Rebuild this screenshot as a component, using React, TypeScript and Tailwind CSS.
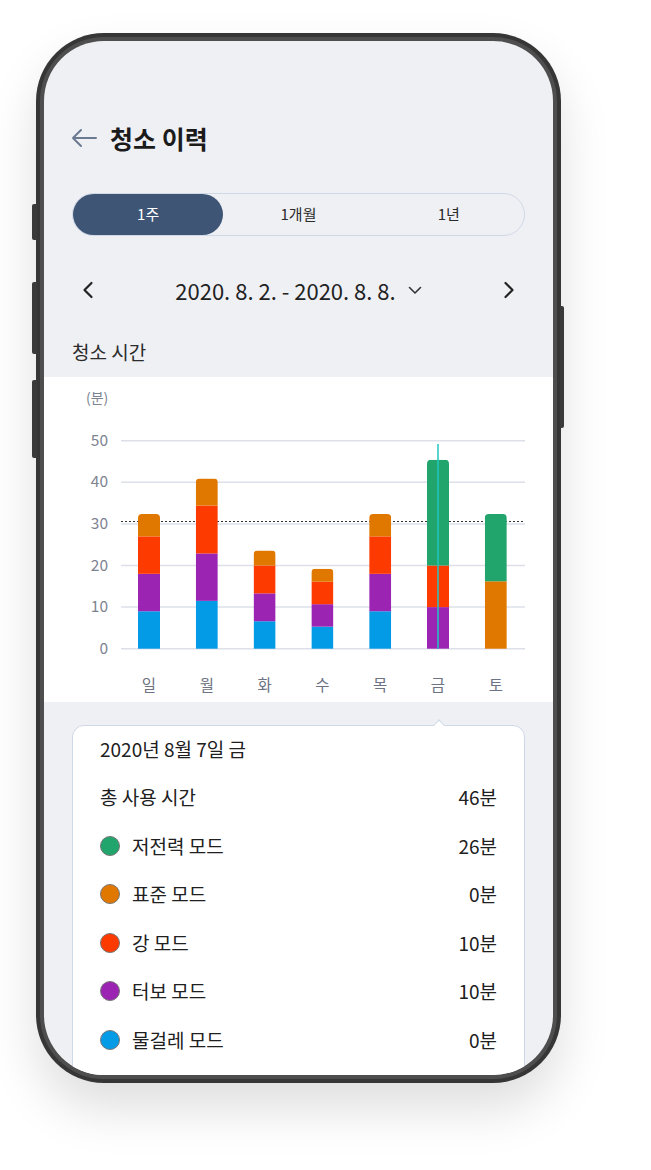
import React from "react";

const FONT = { fontFamily: '"Noto Sans CJK KR", "Noto Sans", sans-serif' };

const C = {
  blue: "#049be6",
  purple: "#9c24b2",
  red: "#fd3a00",
  orange: "#e07800",
  green: "#22a56c",
};

// bottom -> top: 물걸레, 터보, 강, 표준, 저전력
const WEEK: { day: string; v: number[] }[] = [
  { day: "일", v: [9, 9, 9, 5.4, 0] },
  { day: "월", v: [11.5, 11.4, 11.5, 6.5, 0] },
  { day: "화", v: [6.6, 6.7, 6.7, 3.6, 0] },
  { day: "수", v: [5.3, 5.4, 5.4, 3.1, 0] },
  { day: "목", v: [9, 9, 9, 5.4, 0] },
  { day: "금", v: [0, 10, 10, 0, 25.4] },
  { day: "토", v: [0, 0, 0, 16.2, 16.2] },
];
const ORDER = [C.blue, C.purple, C.red, C.orange, C.green];

const BASE = 271.7;
const PX = 4.16;
const yOf = (v: number) => BASE - v * PX;

function Chart() {
  const barW = 22;
  return (
    <svg width="509" height="325" viewBox="0 0 509 325" className="block" style={FONT}>
      <text x="42" y="26" fontSize="14" fill="#7d8391">
        (분)
      </text>
      {[0, 10, 20, 30, 40, 50].map((t) => (
        <g key={t}>
          <line x1="77" x2="481" y1={yOf(t)} y2={yOf(t)} stroke="#dde0e9" strokeWidth="1.5" />
          <text x="64" y={yOf(t) + 5} fontSize="15.5" fill="#7d8391" textAnchor="end">
            {t}
          </text>
        </g>
      ))}
      <line x1="77" x2="481" y1="144.5" y2="144.5" stroke="#333" strokeWidth="1.2" strokeDasharray="2 2" />
      <defs>
        {WEEK.map((d, i) => {
          const cx = 105 + i * 57.8;
          const total = d.v.reduce((a, b) => a + b, 0);
          return (
            <clipPath id={`bar${i}`} key={i}>
              <rect x={cx - barW / 2} y={yOf(total)} width={barW} height={total * PX + 10} rx="4" />
            </clipPath>
          );
        })}
      </defs>
      {WEEK.map((d, i) => {
        const cx = 105 + i * 57.8;
        let acc = 0;
        return (
          <g key={d.day} clipPath={`url(#bar${i})`}>
            {d.v.map((v, k) => {
              if (!v) return null;
              acc += v;
              return (
                <rect
                  key={k}
                  x={cx - barW / 2}
                  y={yOf(acc)}
                  width={barW}
                  height={v * PX}
                  fill={ORDER[k]}
                />
              );
            })}
          </g>
        );
      })}
      <line x1="394" x2="394" y1="67" y2={BASE} stroke="#22c7c1" strokeWidth="1.5" />
      {WEEK.map((d, i) => (
        <text key={d.day} x={105 + i * 57.8} y="314" fontSize="15.5" fill="#6e7383" textAnchor="middle">
          {d.day}
        </text>
      ))}
    </svg>
  );
}

function Row({ color, label, value }: { color?: string; label: string; value: string }) {
  return (
    <div className="flex h-[48.5px] items-center justify-between">
      <div className="flex items-center">
        {color && (
          <span
            className="mr-[12px] inline-block h-[20px] w-[20px] rounded-full border border-[#767676]"
            style={{ backgroundColor: color }}
          />
        )}
        <span>{label}</span>
      </div>
      <span>{value}</span>
    </div>
  );
}

export default function App() {
  return (
    <div className="relative h-[1170px] w-[651px] bg-white pl-[36px] pt-[33px]" style={FONT}>
      <div className="relative h-[1050px] w-[525px]">
        {/* side buttons */}
        <div className="absolute left-[-4px] top-[171px] h-[36px] w-[5px] rounded-l-[2px] bg-[#3a3a3a]" />
        <div className="absolute left-[-4px] top-[249px] h-[72px] w-[5px] rounded-l-[2px] bg-[#3a3a3a]" />
        <div className="absolute left-[-4px] top-[347px] h-[78px] w-[5px] rounded-l-[2px] bg-[#3a3a3a]" />
        <div className="absolute right-[-3px] top-[273px] h-[122px] w-[4px] rounded-r-[2px] bg-[#3a3a3a]" />

        <div className="h-full w-full rounded-[68px] bg-[#363636] p-[4px] shadow-[0_26px_50px_rgba(0,0,0,0.13)]">
          <div className="h-full w-full rounded-[64px] bg-[#4e4e4e] p-[4px]">
            <div className="h-full w-full overflow-hidden rounded-[60px] bg-[#eff0f4]">
              {/* header */}
              <div className="box-content flex h-[40px] items-center pl-[27px] pt-[77px]">
                <svg width="26" height="20" viewBox="0 0 26 20" fill="none">
                  <path d="M25 10H2M10 2L2 10L10 18" stroke="#6b7a90" strokeWidth="2" strokeLinecap="round" strokeLinejoin="round" />
                </svg>
                <span className="ml-[13px] text-[25px] font-bold leading-none text-[#1b1b1b]">청소 이력</span>
              </div>

              {/* segmented */}
              <div className="mx-[28px] mt-[35px] grid h-[43px] grid-cols-3 rounded-full border border-[#cfd8e6] text-[15px]">
                <div className="flex items-center justify-center rounded-full bg-[#3e5576] text-white">1주</div>
                <div className="flex items-center justify-center text-[#2a2a2a]">1개월</div>
                <div className="flex items-center justify-center text-[#2a2a2a]">1년</div>
              </div>

              {/* date row */}
              <div className="mt-[34px] flex h-[40px] items-center justify-between px-[38px] text-[#222]">
                <svg width="12" height="18" viewBox="0 0 12 18" fill="none">
                  <path d="M9.5 2L2.5 9L9.5 16" stroke="#222" strokeWidth="2.2" strokeLinecap="round" strokeLinejoin="round" />
                </svg>
                <div className="flex items-center">
                  <span className="text-[22px]">2020. 8. 2. - 2020. 8. 8.</span>
                  <svg className="ml-[12px]" width="14" height="9" viewBox="0 0 14 9" fill="none">
                    <path d="M1.5 1.5L7 7L12.5 1.5" stroke="#333" strokeWidth="1.6" strokeLinecap="round" strokeLinejoin="round" />
                  </svg>
                </div>
                <svg width="12" height="18" viewBox="0 0 12 18" fill="none">
                  <path d="M2.5 2L9.5 9L2.5 16" stroke="#222" strokeWidth="2.2" strokeLinecap="round" strokeLinejoin="round" />
                </svg>
              </div>

              <div className="mt-[30px] h-[24px] pl-[28px] text-[19px] leading-[24px] text-[#2b2b2b]">청소 시간</div>

              {/* chart */}
              <div className="mt-[13px] h-[325px] bg-white">
                <Chart />
              </div>

              {/* detail card */}
              <div className="relative mx-[28px] mt-[23px] rounded-[12px] border border-[#cfd8e6] bg-white px-[27px] pb-[20px] text-[19px] text-[#202020]">
                <div className="absolute left-[362px] top-[-5px] h-[8px] w-[8px] rotate-45 border-l border-t border-[#cfd8e6] bg-white" />
                <div className="flex h-[47px] items-center">2020년 8월 7일 금</div>
                <Row label="총 사용 시간" value="46분" />
                <Row color={C.green} label="저전력 모드" value="26분" />
                <Row color={C.orange} label="표준 모드" value="0분" />
                <Row color={C.red} label="강 모드" value="10분" />
                <Row color={C.purple} label="터보 모드" value="10분" />
                <Row color={C.blue} label="물걸레 모드" value="0분" />
              </div>
            </div>
          </div>
        </div>
      </div>
    </div>
  );
}
